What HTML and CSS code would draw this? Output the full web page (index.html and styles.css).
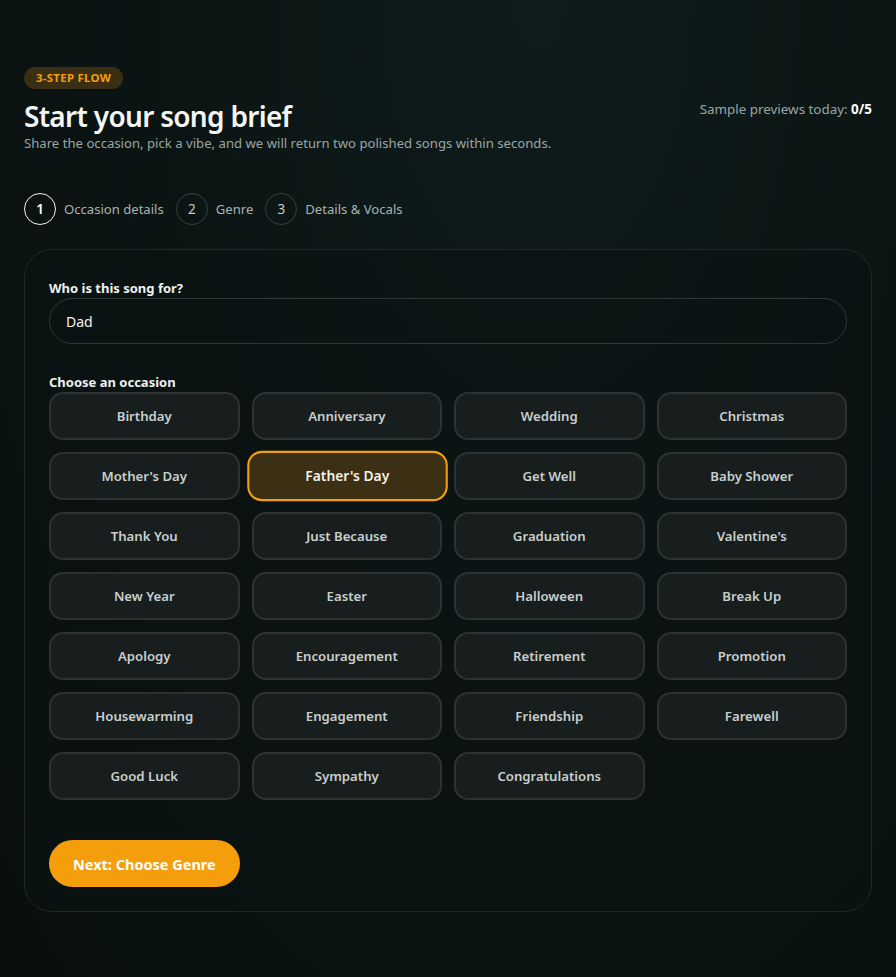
FILE: index.html
```html
<!DOCTYPE html>
<html lang="en">
<head>
    <meta charset="UTF-8">
    <meta name="viewport" content="width=device-width, initial-scale=1.0">
    <title>Song brief</title>
    <link rel="stylesheet" href="styles.css">
</head>
<body>

<div class="page">
    <div class="brief-header">
        <div class="brief-intro">
            <span class="badge">3-Step Flow</span>
            <h1 class="brief-title">Start your song brief</h1>
            <p class="brief-sub">Share the occasion, pick a vibe, and we will return two polished songs within seconds.</p>
        </div>
        <div class="previews">Sample previews today: <strong>0/5</strong></div>
    </div>

    <div class="steps">
        <div class="step active"><span class="step-num">1</span>Occasion details</div>
        <div class="step"><span class="step-num">2</span>Genre</div>
        <div class="step"><span class="step-num">3</span>Details &amp; Vocals</div>
    </div>

    <div class="card">
        <label class="field-label" for="recipient">Who is this song for?</label>
        <input class="field-input" id="recipient" type="text" value="Dad">

        <div class="field-label occasion-label">Choose an occasion</div>
        <div class="occasions">
            <button class="occasion">Birthday</button>
            <button class="occasion">Anniversary</button>
            <button class="occasion">Wedding</button>
            <button class="occasion">Christmas</button>
            <button class="occasion">Mother's Day</button>
            <button class="occasion selected">Father's Day</button>
            <button class="occasion">Get Well</button>
            <button class="occasion">Baby Shower</button>
            <button class="occasion">Thank You</button>
            <button class="occasion">Just Because</button>
            <button class="occasion">Graduation</button>
            <button class="occasion">Valentine's</button>
            <button class="occasion">New Year</button>
            <button class="occasion">Easter</button>
            <button class="occasion">Halloween</button>
            <button class="occasion">Break Up</button>
            <button class="occasion">Apology</button>
            <button class="occasion">Encouragement</button>
            <button class="occasion">Retirement</button>
            <button class="occasion">Promotion</button>
            <button class="occasion">Housewarming</button>
            <button class="occasion">Engagement</button>
            <button class="occasion">Friendship</button>
            <button class="occasion">Farewell</button>
            <button class="occasion">Good Luck</button>
            <button class="occasion">Sympathy</button>
            <button class="occasion">Congratulations</button>
        </div>

        <button class="next-btn">Next: Choose Genre</button>
    </div>
</div>

</body>
</html>
```

FILE: styles.css
```css
body {
    margin: 0;
    min-height: 100vh;
    background: radial-gradient(ellipse at 60% 0%, #0f1c1c 0%, #0b1514 45%, #090f0f 100%);
    font-family: 'Noto Sans', 'Open Sans', sans-serif;
    color: #e8ecea;
}
.page {
    padding: 65px 24px 40px;
    max-width: 848px;
}
.brief-header {
    display: flex;
    justify-content: space-between;
    align-items: center;
}
.badge {
    display: inline-block;
    background: #3a2f12;
    color: #f59e0b;
    font-size: 11.4px;
    font-weight: 700;
    text-transform: uppercase;
    letter-spacing: 0.3px;
    line-height: 14px;
    padding: 4px 12px;
    border-radius: 999px;
}
.brief-title {
    margin: 9px 0 0;
    font-size: 28px;
    font-weight: 600;
    line-height: 36px;
    letter-spacing: -0.7px;
    color: #f4f6f5;
}
.brief-sub {
    margin: 0;
    font-size: 13.15px;
    line-height: 18px;
    color: #9aa6a4;
}
.previews {
    font-size: 13.4px;
    color: #9aa6a4;
}
.previews strong {
    color: #fff;
    font-weight: 700;
}
.steps {
    display: flex;
    gap: 12px;
    margin-top: 41px;
}
.step {
    display: flex;
    align-items: center;
    gap: 8px;
    font-size: 13.1px;
    color: #a9b3b1;
}
.step-num {
    width: 30px;
    height: 30px;
    border: 1px solid #35403e;
    border-radius: 50%;
    display: flex;
    align-items: center;
    justify-content: center;
    font-size: 13.5px;
    color: #c3cbc9;
}
.step.active .step-num {
    border: 1.5px solid #f1f3f2;
    color: #fff;
    font-weight: 600;
}
.card {
    margin-top: 24px;
    border: 1px solid #1f2928;
    border-radius: 28px;
    background: rgba(10, 18, 18, 0.5);
    padding: 28px 24px 24px;
}
.field-label {
    display: block;
    font-size: 13px;
    font-weight: 700;
    line-height: 20px;
    color: #eef1f0;
}
.field-input {
    display: block;
    box-sizing: border-box;
    width: 100%;
    height: 46px;
    padding: 0 16px;
    background: transparent;
    border: 1px solid #2f3a38;
    border-radius: 999px;
    font-family: inherit;
    font-size: 14px;
    color: #f1f3f2;
    outline: none;
}
.occasion-label {
    margin-top: 28px;
}
.occasions {
    display: grid;
    grid-template-columns: repeat(4, 1fr);
    gap: 12px;
}
.occasion {
    height: 48px;
    background: #181e1e;
    border: 2px solid #2c3332;
    border-radius: 14px;
    font-family: inherit;
    font-size: 13.2px;
    font-weight: 600;
    color: #c8cfcd;
    cursor: pointer;
}
.occasion.selected {
    background: #3b3013;
    border-color: #f59e0b;
    color: #f6f1e4;
    transform: scale(1.05);
}
.next-btn {
    margin-top: 40px;
    height: 47px;
    padding: 0 24px;
    background: #f59e0b;
    border: none;
    border-radius: 999px;
    font-family: inherit;
    font-size: 14.5px;
    font-weight: 700;
    color: #fff;
    cursor: pointer;
}
```
